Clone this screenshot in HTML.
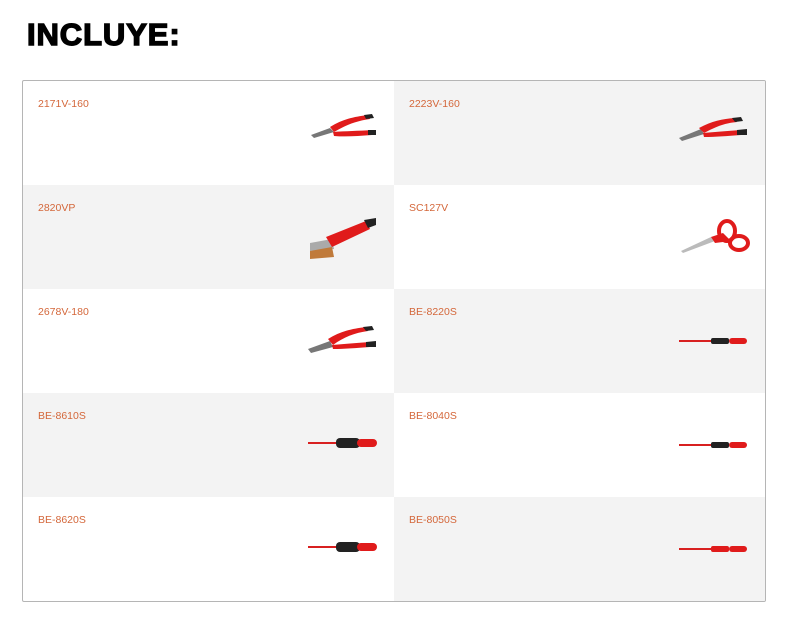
<!DOCTYPE html>
<html><head><style>
body{margin:0;background:#fff;width:796px;height:638px;position:relative;font-family:"Liberation Sans",Arial,sans-serif;overflow:hidden}
h1{position:absolute;left:27px;top:17px;margin:0;font-size:31px;font-weight:bold;letter-spacing:0.9px;-webkit-text-stroke:1.4px #000;color:#000}
.box{position:absolute;left:22px;top:80px;width:742px;height:520px;border:1px solid #b5b5b5;border-radius:2px;overflow:hidden}
.c{position:absolute;width:371px;height:104px}
.g{background:#f3f3f3}
.c span{position:absolute;left:15px;top:17px;font-size:10.5px;color:#d4673a}
.c svg{position:absolute}
</style></head><body>
<h1>INCLUYE:</h1>
<div class="box">
<div class="c" style="left:0;top:0"><span>2171V-160</span>
<svg style="left:285px;top:30px" width="72" height="40" viewBox="0 0 72 40"><path d="M3 24 L22 17 L26 21 L6 27Z" fill="#777"/><path d="M22 16 C35 8 45 6 60 4 L62 8 C48 10 38 14 26 21Z" fill="#e01b1b"/><path d="M25 21 C38 20 50 20 64 19 L64 24 C50 25 38 26 26 25Z" fill="#e01b1b"/><path d="M56 4 L64 3 L66 7 L58 8Z" fill="#222"/><path d="M60 19 L68 19 L68 24 L60 24Z" fill="#222"/></svg></div>
<div class="c g" style="left:371px;top:0"><span>2223V-160</span>
<svg style="left:283px;top:30px" width="72" height="40" viewBox="0 0 72 40"><path d="M2 27 L24 18 L27 23 L5 30Z" fill="#777"/><path d="M22 17 C35 10 45 8 58 7 L60 11 C48 12 38 16 27 22Z" fill="#e01b1b"/><path d="M26 22 C38 21 50 20 64 19 L64 24 C50 25 38 26 27 26Z" fill="#e01b1b"/><path d="M55 7 L64 6 L66 10 L58 11Z" fill="#222"/><path d="M60 19 L70 18 L70 24 L60 24Z" fill="#222"/></svg></div>
<div class="c g" style="left:0;top:104px"><span>2820VP</span>
<svg style="left:283px;top:26px" width="76" height="52" viewBox="0 0 76 52"><path d="M4 32 L26 28 L28 38 L4 40Z" fill="#aaa"/><path d="M4 40 L26 36 L28 46 L4 48Z" fill="#c07a3a"/><path d="M20 26 L60 10 L64 18 L26 36Z" fill="#e01b1b"/><path d="M58 9 L70 7 L70 14 L62 17Z" fill="#222"/></svg></div>
<div class="c" style="left:371px;top:104px"><span>SC127V</span>
<svg style="left:283px;top:26px" width="76" height="50" viewBox="0 0 76 50"><path d="M4 40 L34 26 L38 30 L6 42Z" fill="#bbb"/><ellipse cx="50" cy="20" rx="8" ry="10" fill="none" stroke="#e01b1b" stroke-width="4"/><ellipse cx="62" cy="32" rx="9" ry="7" fill="none" stroke="#e01b1b" stroke-width="4"/><path d="M34 26 L46 22 L54 30 L38 32Z" fill="#e01b1b"/></svg></div>
<div class="c" style="left:0;top:208px"><span>2678V-180</span>
<svg style="left:283px;top:30px" width="72" height="42" viewBox="0 0 72 42"><path d="M2 30 L24 22 L27 28 L5 34Z" fill="#777"/><path d="M22 20 C35 12 45 10 60 8 L62 12 C48 14 38 18 27 26Z" fill="#e01b1b"/><path d="M26 26 C38 25 50 24 64 23 L64 28 C50 29 38 30 27 30Z" fill="#e01b1b"/><path d="M57 8 L66 7 L68 11 L60 12Z" fill="#222"/><path d="M60 23 L70 22 L70 28 L60 28Z" fill="#222"/></svg></div>
<div class="c g" style="left:371px;top:208px"><span>BE-8220S</span>
<svg style="left:284px;top:46px" width="70" height="12" viewBox="0 0 70 12"><rect x="1" y="5" width="32" height="2" fill="#d82020"/><rect x="33" y="3" width="18" height="6" rx="2" fill="#222"/><rect x="51" y="3" width="18" height="6" rx="3" fill="#e01b1b"/></svg></div>
<div class="c g" style="left:0;top:312px"><span>BE-8610S</span>
<svg style="left:284px;top:42px" width="72" height="16" viewBox="0 0 72 16"><rect x="1" y="7" width="28" height="2" fill="#d82020"/><rect x="29" y="3" width="24" height="10" rx="4" fill="#222"/><rect x="50" y="4" width="20" height="8" rx="4" fill="#e01b1b"/></svg></div>
<div class="c" style="left:371px;top:312px"><span>BE-8040S</span>
<svg style="left:284px;top:46px" width="70" height="12" viewBox="0 0 70 12"><rect x="1" y="5" width="32" height="2" fill="#d82020"/><rect x="33" y="3" width="18" height="6" rx="2" fill="#222"/><rect x="51" y="3" width="18" height="6" rx="3" fill="#e01b1b"/></svg></div>
<div class="c" style="left:0;top:416px"><span>BE-8620S</span>
<svg style="left:284px;top:42px" width="72" height="16" viewBox="0 0 72 16"><rect x="1" y="7" width="28" height="2" fill="#d82020"/><rect x="29" y="3" width="24" height="10" rx="4" fill="#222"/><rect x="50" y="4" width="20" height="8" rx="4" fill="#e01b1b"/></svg></div>
<div class="c g" style="left:371px;top:416px"><span>BE-8050S</span>
<svg style="left:284px;top:46px" width="70" height="12" viewBox="0 0 70 12"><rect x="1" y="5" width="32" height="2" fill="#d82020"/><rect x="33" y="3" width="18" height="6" rx="2" fill="#e01b1b"/><rect x="51" y="3" width="18" height="6" rx="3" fill="#e01b1b"/></svg></div>
</div>
</body></html>
